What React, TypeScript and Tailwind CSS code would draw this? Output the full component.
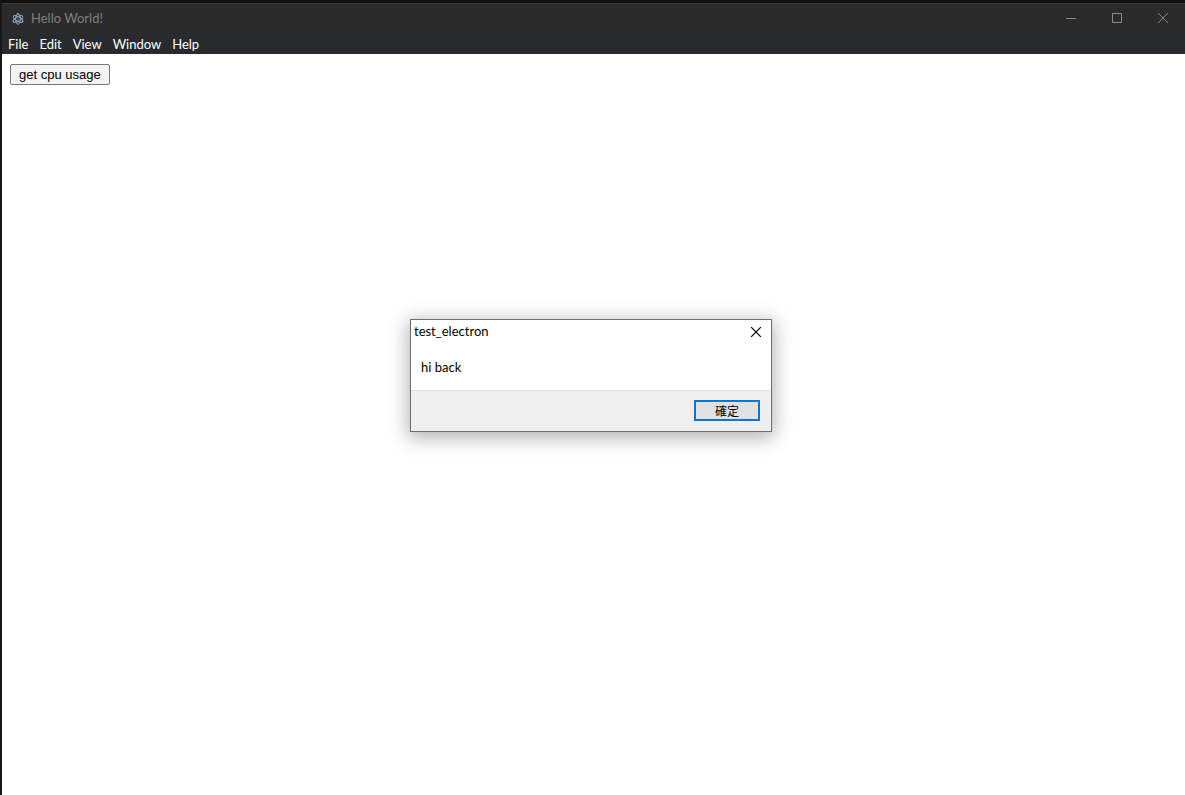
const menuItems = ['File', 'Edit', 'View', 'Window', 'Help'];

function ElectronIcon() {
  return (
    <svg className="h-3.5 w-3.5" viewBox="0 0 14 14" fill="none" stroke="#93a6b4" strokeWidth="0.9" aria-hidden="true">
      <circle cx="7" cy="7" r="7" fill="#232a36" stroke="none" />
      <ellipse cx="7" cy="7" rx="5.4" ry="2.3" transform="rotate(30 7 7)" />
      <ellipse cx="7" cy="7" rx="5.4" ry="2.3" transform="rotate(-30 7 7)" />
      <ellipse cx="7" cy="7" rx="5.4" ry="2.3" transform="rotate(90 7 7)" />
      <circle cx="7" cy="7" r="0.6" fill="#a9bac6" stroke="none" />
      <circle cx="2.4" cy="9.7" r="0.8" fill="#a9bac6" stroke="none" />
      <circle cx="11.6" cy="9.7" r="0.8" fill="#a9bac6" stroke="none" />
      <circle cx="7" cy="1.7" r="0.8" fill="#a9bac6" stroke="none" />
    </svg>
  );
}

function CaptionButton({ label, path }: { label: string; path: string }) {
  return (
    <button type="button" aria-label={label} className="flex h-full w-[46px] items-center justify-center pl-0.5 text-[#8b8b8b]">
      <svg className="h-2.5 w-2.5" viewBox="0 0 10 10" fill="none" stroke="currentColor" aria-hidden="true">
        <path d={path} />
      </svg>
    </button>
  );
}

function MessageBox() {
  return (
    <div
      role="dialog"
      aria-labelledby="message-title"
      className="w-[362px] border border-[#6d6d6d] bg-white text-black shadow-[0_4px_18px_2px_rgba(0,0,0,0.3)]"
    >
      <div className="flex h-6 items-center justify-between pl-[3px]">
        <h1 id="message-title" className="pb-0.5">
          test_electron
        </h1>
        <button type="button" aria-label="Close" className="flex h-6 w-[30px] items-center justify-center">
          <svg className="h-2.5 w-2.5" viewBox="0 0 10 10" fill="none" stroke="#000" strokeWidth="1.2" aria-hidden="true">
            <path d="M0 0L10 10M10 0L0 10" />
          </svg>
        </button>
      </div>
      <p className="h-[46px] px-2.5 pt-[15px]">hi back</p>
      <div className="flex h-[41px] items-start justify-end border-t border-[#dfdfdf] bg-[#efefef] pt-[9px] pr-[11px]">
        <button
          type="button"
          className="flex h-[21px] w-[66px] items-center justify-center border-2 border-[#0078d7] bg-[#e1e1e1] font-['Noto_Sans_CJK_TC',sans-serif] text-[12px]"
        >
          確定
        </button>
      </div>
    </div>
  );
}

export default function App() {
  return (
    <div className="relative flex min-h-screen flex-col border-t-3 border-l-2 border-t-[#101010] border-l-[#16171a] bg-white font-['Lato','Noto_Sans_CJK_TC',sans-serif] text-[13px] leading-4">
      <header className="border-t border-[#383838] bg-[#2b2b2b]">
        <div className="flex h-[30px] items-center pl-[9px]">
          <ElectronIcon />
          <span className="ml-1.5 grow pb-0.5 text-[#7f7f7f]">Hello World!</span>
          <div className="flex h-7 self-start">
            <CaptionButton label="Minimize" path="M0 5.5H10" />
            <CaptionButton label="Maximize" path="M0.5 0.5H9.5V9.5H0.5Z" />
            <CaptionButton label="Close" path="M0 0L10 10M10 0L0 10" />
          </div>
        </div>
        <nav className="flex h-5 items-center gap-[11px] bg-[#292a2d] px-1.5 text-white">
          {menuItems.map((item) => (
            <button key={item} type="button">
              {item}
            </button>
          ))}
        </nav>
      </header>
      <main className="grow px-2 pt-2.5">
        <button
          type="button"
          className="block h-[21px] rounded-[2px] border border-[#767676] bg-[#f3f3f3] px-2 font-['Liberation_Sans',sans-serif] text-[13px] leading-[19px] text-black"
        >
          get cpu usage
        </button>
      </main>
      <div className="absolute inset-x-0 top-[316px] flex justify-center pr-[5px]">
        <MessageBox />
      </div>
    </div>
  );
}
